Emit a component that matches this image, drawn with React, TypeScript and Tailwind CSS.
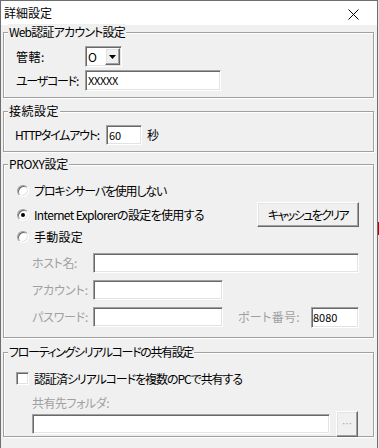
import React, { useLayoutEffect, useRef, useState } from "react";

const sunken =
  "bg-white border border-t-[#a0a0a0] border-l-[#a0a0a0] border-b-white border-r-white shadow-[inset_1px_1px_0_#696969,inset_-1px_-1px_0_#e3e3e3]";
const raised =
  "bg-[#f0f0f0] border border-t-white border-l-white border-b-[#696969] border-r-[#696969] shadow-[inset_-1px_-1px_0_#a0a0a0,inset_1px_1px_0_#e3e3e3]";

function Fit({ w, children, className = "" }: { w: number; children: string; className?: string }) {
  const ref = useRef<HTMLSpanElement>(null);
  const [ls, setLs] = useState(0);
  useLayoutEffect(() => {
    const el = ref.current;
    if (!el) return;
    el.style.letterSpacing = "0px";
    const natural = el.getBoundingClientRect().width;
    const n = children.length;
    setLs((w - natural) / n);
  }, [w, children]);
  return (
    <span ref={ref} className={`inline-block whitespace-nowrap ${className}`} style={{ letterSpacing: `${ls}px` }}>
      {children}
    </span>
  );
}

function Group({ title, tw, h, children }: { title: string; tw: number; h: string; children: React.ReactNode }) {
  return (
    <div className={`relative ml-[2px] w-[371px] ${h} border border-[#a0a0a0] shadow-[inset_1px_1px_0_#fff,1px_1px_0_#fff]`}>
      <span className="absolute left-[4px] top-[-9px] bg-[#f0f0f0] px-[1px] leading-[16px] whitespace-nowrap">
        <Fit w={tw}>{title}</Fit>
      </span>
      {children}
    </div>
  );
}

function Radio({ checked }: { checked?: boolean }) {
  return (
    <div className="w-[12px] h-[12px] rounded-full bg-white border border-t-[#a0a0a0] border-l-[#a0a0a0] border-b-white border-r-white shadow-[inset_1px_1px_0_#696969,inset_-1px_-1px_0_#e3e3e3] flex items-center justify-center shrink-0">
      {checked && <div className="w-[4px] h-[4px] rounded-full bg-black" />}
    </div>
  );
}

export default function App() {
  return (
    <div className="w-[379px] h-[448px] flex bg-[#f0f0f0] text-[12px] text-black font-['Noto_Sans_CJK_JP','Noto_Sans',sans-serif] [font-feature-settings:'palt'] overflow-hidden">
      <div className="w-[378px] h-[448px] border-l border-t border-r border-[#6f6f6f] flex flex-col">
        {/* title bar */}
        <div className="h-[24px] bg-white flex items-center justify-between pl-[3px] shrink-0">
          <span className="leading-none">詳細設定</span>
          <div className="w-[46px] h-[24px] flex items-center justify-center pr-[2px] pt-[2px]">
            <svg width="11" height="11" viewBox="0 0 11 11">
              <path d="M0.5 0.5 L10.5 10.5 M10.5 0.5 L0.5 10.5" stroke="#000" strokeWidth="1" fill="none" />
            </svg>
          </div>
        </div>

        <div className="flex flex-col pt-[7px]">
          {/* group 1 */}
          <Group title="Web認証アカウント設定" tw={116} h="h-[66px]">
            <div className="flex flex-col pl-[12px] pt-[13px]">
              <div className="flex items-center h-[21px]">
                <span className="w-[69px]">
                  <Fit w={29}>管轄:</Fit>
                </span>
                <div className={`${sunken} w-[37px] h-[21px] flex items-center`}>
                  <span className="pl-[2px] text-[12px] leading-none flex-1">O</span>
                  <div className={`${raised} w-[15px] h-[17px] mr-[1px] flex items-center justify-center`}>
                    <svg width="7" height="4" viewBox="0 0 7 4"><path d="M0 0 H7 L3.5 4 Z" fill="#000" /></svg>
                  </div>
                </div>
              </div>
              <div className="flex items-center h-[21px] mt-[3px]">
                <span className="w-[69px]">
                  <Fit w={62}>ユーザコード:</Fit>
                </span>
                <div className={`${sunken} w-[136px] h-[21px] flex items-center pl-[2px] text-[11px] tracking-[-0.3px]`}>XXXXX</div>
              </div>
            </div>
          </Group>

          {/* group 2 */}
          <div className="mt-[13px]">
            <Group title="接続設定" tw={50} h="h-[41px]">
              <div className="flex items-center pl-[11px] pt-[13px] h-[33px]">
                <span className="w-[91px]">
                  <Fit w={84}>HTTPタイムアウト:</Fit>
                </span>
                <div className={`${sunken} w-[36px] h-[20px] flex items-center pl-[2px] text-[11px]`}>60</div>
                <span className="ml-[5px]">秒</span>
              </div>
            </Group>
          </div>

          {/* group 3 */}
          <div className="mt-[12px]">
            <Group title="PROXY設定" tw={59} h="h-[174px]">
              <div className="flex flex-col pt-[14px]">
                <div className="flex items-center h-[23px] pl-[13px]">
                  <Radio />
                  <span className="ml-[5px]">
                    <Fit w={132}>プロキシサーバを使用しない</Fit>
                  </span>
                </div>
                <div className="flex items-center h-[25px] pl-[13px]">
                  <Radio checked />
                  <span className="ml-[5px] flex-1">
                    <Fit w={170}>Internet Explorerの設定を使用する</Fit>
                  </span>
                  <button className={`${raised} w-[102px] h-[25px] mr-[14px] flex items-center justify-center text-[12px]`}>
                    <Fit w={80}>キャッシュをクリア</Fit>
                  </button>
                </div>
                <div className="flex items-center h-[20px] pl-[13px]">
                  <Radio />
                  <span className="ml-[5px]">
                    <Fit w={49}>手動設定</Fit>
                  </span>
                </div>
                <div className="flex items-center h-[20px] mt-[6px] pl-[28px] text-[#a0a0a0]">
                  <span className="w-[61px]">
                    <Fit w={45}>ホスト名:</Fit>
                  </span>
                  <div className={`${sunken} w-[266px] h-[20px]`} />
                </div>
                <div className="flex items-center h-[20px] mt-[7px] pl-[28px] text-[#a0a0a0]">
                  <span className="w-[61px]">
                    <Fit w={56}>アカウント:</Fit>
                  </span>
                  <div className={`${sunken} w-[130px] h-[20px]`} />
                </div>
                <div className="flex items-center h-[20px] mt-[7px] pl-[28px] text-[#a0a0a0]">
                  <span className="w-[61px]">
                    <Fit w={56}>パスワード:</Fit>
                  </span>
                  <div className={`${sunken} w-[130px] h-[20px]`} />
                  <span className="ml-[15px] w-[73px]">
                    <Fit w={62}>ポート番号:</Fit>
                  </span>
                  <div className={`${sunken} w-[48px] h-[21px] flex items-center pl-[1px] text-[11px] text-black`}>8080</div>
                </div>
              </div>
            </Group>
          </div>

          {/* group 4 */}
          <div className="mt-[14px]">
            <Group title="フローティングシリアルコードの共有設定" tw={184} h="h-[85px]">
              <div className="flex flex-col pt-[17px]">
                <div className="flex items-center h-[17px] pl-[12px]">
                  <div className={`${sunken} w-[13px] h-[13px] shrink-0`} />
                  <span className="ml-[5px]">
                    <Fit w={208}>認証済シリアルコードを複数のPCで共有する</Fit>
                  </span>
                </div>
                <div className="flex items-center h-[16px] mt-[8px] pl-[28px] text-[#a0a0a0]">
                  <Fit w={77}>共有先フォルダ:</Fit>
                </div>
                <div className="flex items-center h-[26px] pl-[28px]">
                  <div className={`${sunken} w-[298px] h-[20px]`} />
                  <div className={`${raised} ml-[6px] w-[22px] h-[26px] flex items-center justify-center text-[10px] text-[#a0a0a0] leading-none`}>…</div>
                </div>
              </div>
            </Group>
          </div>
        </div>
      </div>
      <div className="w-[1px] h-[448px] flex flex-col bg-[#e6e6e6]">
        <div className="h-[222px]" />
        <div className="h-[13px] bg-[#c00000]" />
      </div>
    </div>
  );
}
